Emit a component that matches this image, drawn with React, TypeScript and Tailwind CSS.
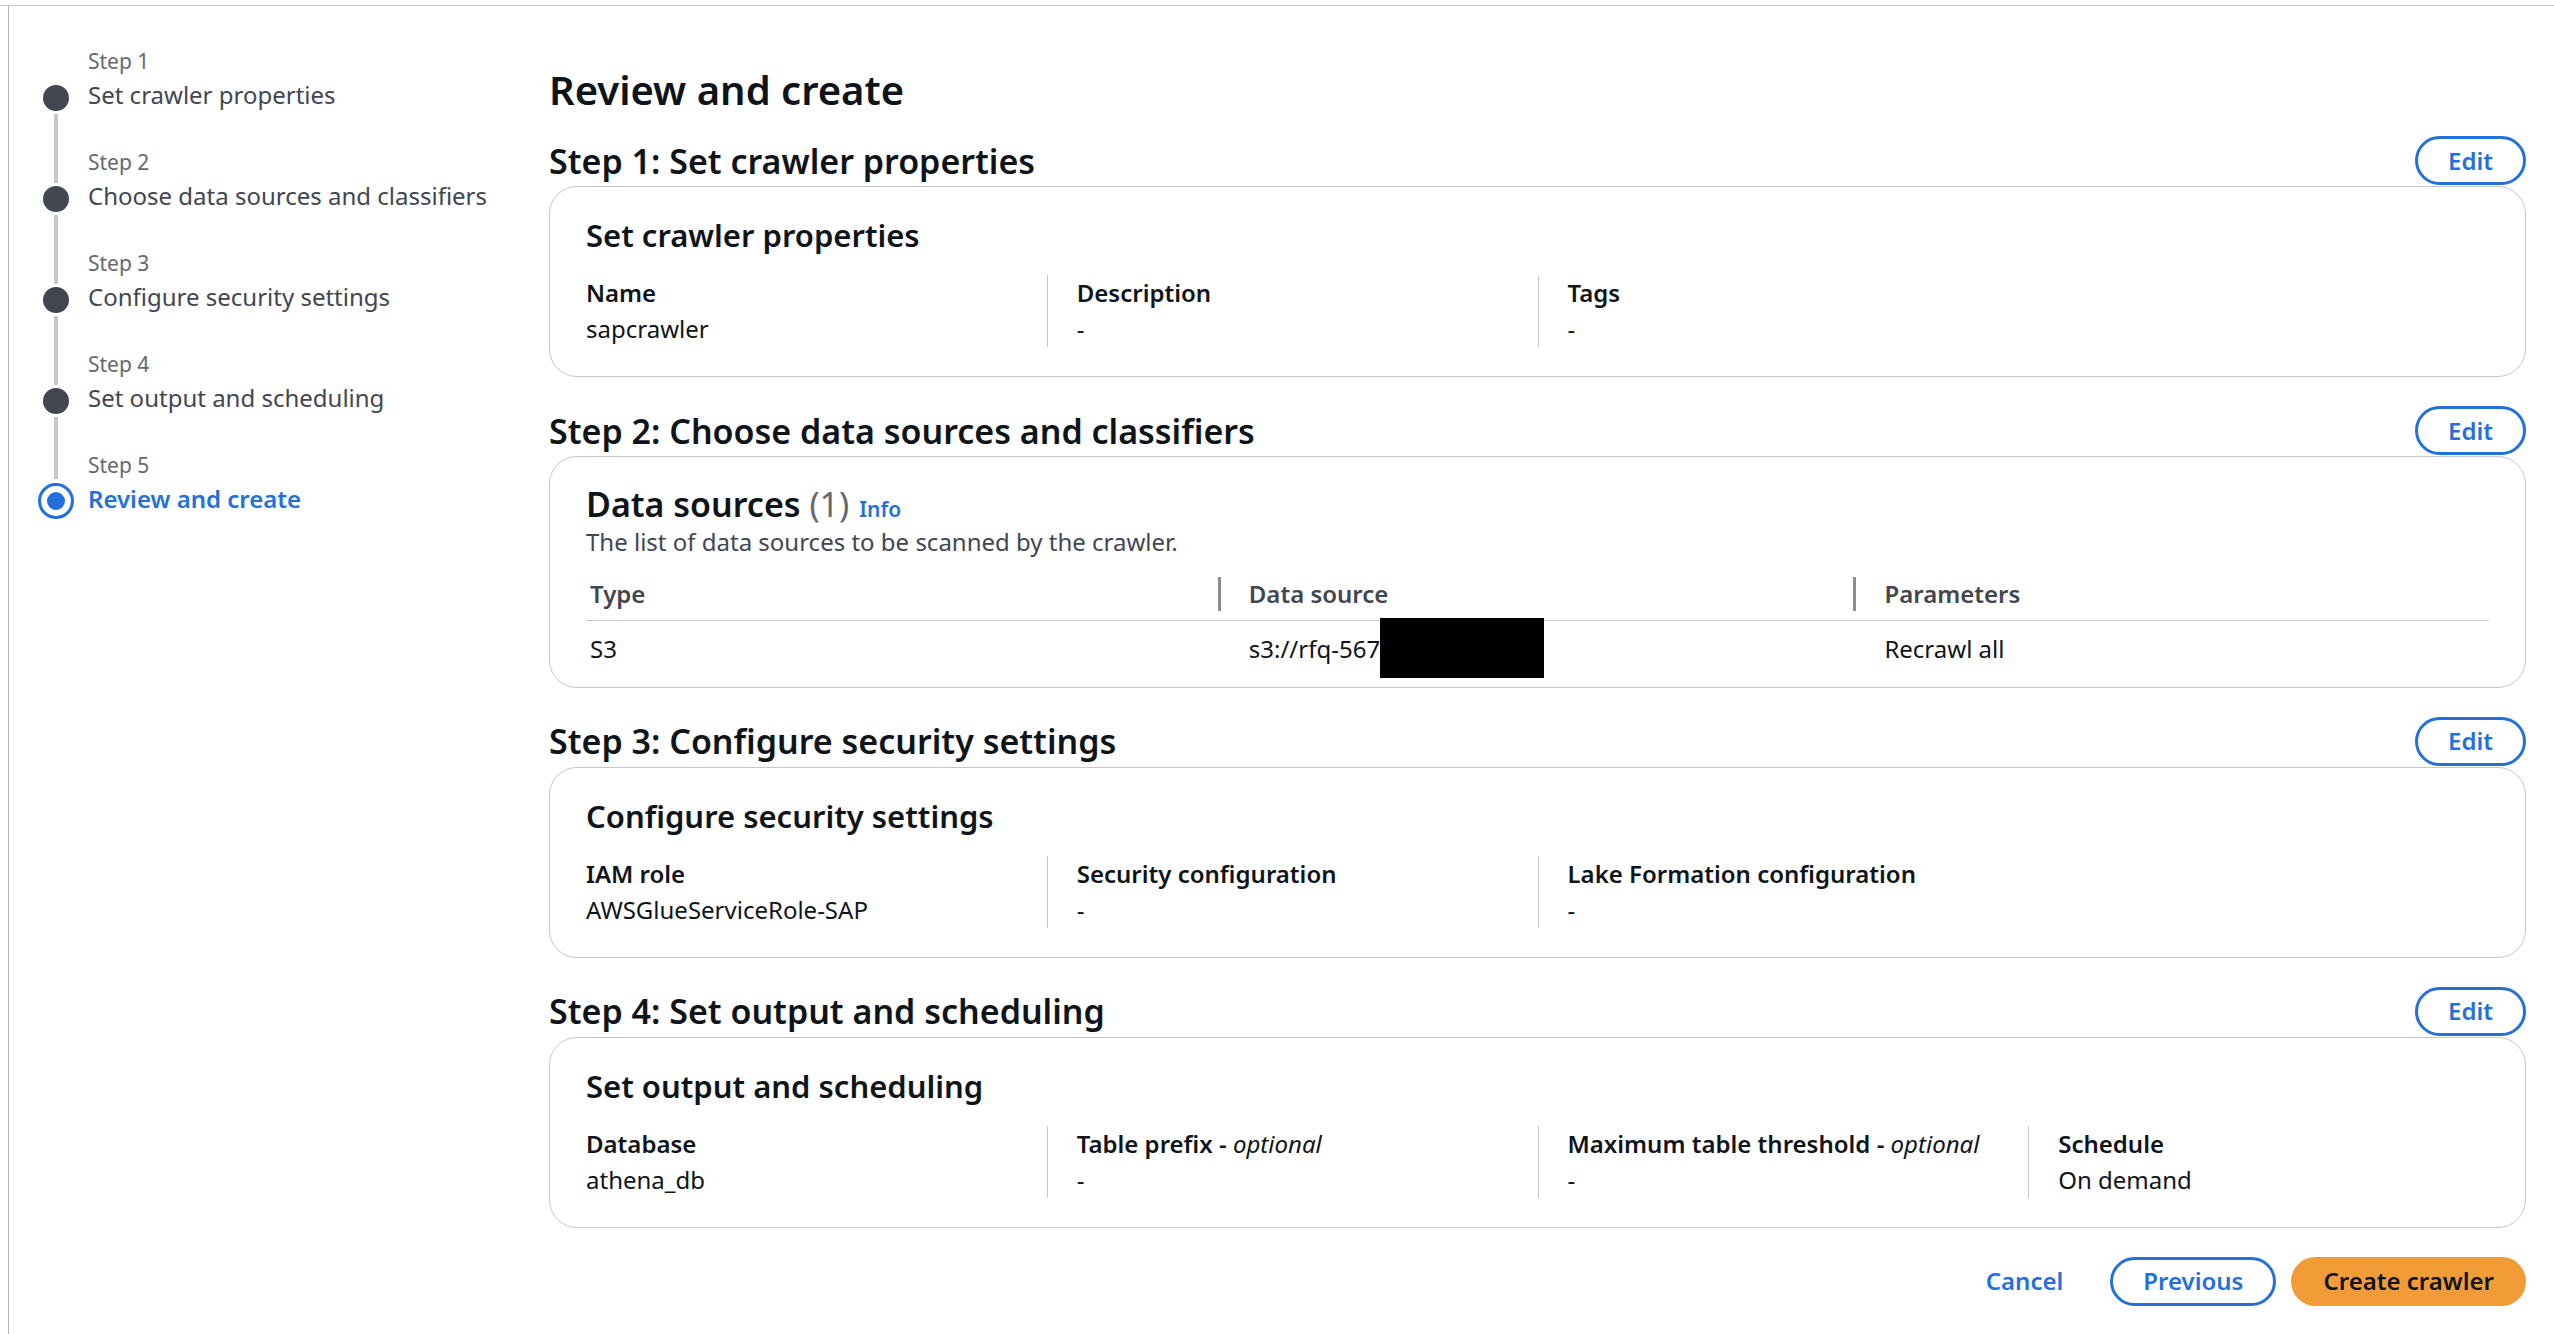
import React from "react";

type Field = { label: string; value: string; optional?: boolean };

const steps = [
  "Set crawler properties",
  "Choose data sources and classifiers",
  "Configure security settings",
  "Set output and scheduling",
  "Review and create",
];

function StepNav() {
  return (
    <nav aria-label="Steps" className="w-[540px] shrink-0 pt-10 pl-[29px]">
      <ol>
        {steps.map((title, i) => {
          const current = i === steps.length - 1;
          return (
            <li key={title} className="flex h-[101px] gap-3.5">
              <div className="flex w-9 shrink-0 flex-col items-center">
                <span
                  className={`w-1 ${current ? "mb-1 h-[29px]" : "mb-[3px] h-9"} ${
                    i === 0 ? "bg-transparent" : "bg-[#c6c6cd]"
                  }`}
                />
                {current ? (
                  <span className="flex size-9 items-center justify-center rounded-full border-3 border-[#2470db]">
                    <span className="size-[18px] rounded-full bg-[#2470db]" />
                  </span>
                ) : (
                  <>
                    <span className="size-[26px] rounded-full bg-[#424650]" />
                    <span className="mt-[3px] w-1 flex-1 bg-[#c6c6cd]" />
                  </>
                )}
              </div>
              <div className="whitespace-nowrap">
                <div className="text-[21px] leading-[30px] text-[#656871]">Step {i + 1}</div>
                {current ? (
                  <div aria-current="step" className="leading-[38px] font-semibold text-[#2470db]">
                    {title}
                  </div>
                ) : (
                  <a href="#" className="block leading-[38px] text-[#424650]">
                    {title}
                  </a>
                )}
              </div>
            </li>
          );
        })}
      </ol>
    </nav>
  );
}

function OutlineButton({ children, label }: { children: React.ReactNode; label?: string }) {
  return (
    <button
      type="button"
      aria-label={label}
      className="h-[49px] rounded-full border-3 border-[#2470db] px-[30px] leading-9 font-semibold text-[#2470db]"
    >
      {children}
    </button>
  );
}

function Section({ title, children }: { title: string; children: React.ReactNode }) {
  return (
    <section className="mb-[29px]">
      <div className="mb-px flex h-[49px] items-center justify-between">
        <h2 className="text-[34px] leading-10 font-semibold">{title}</h2>
        <OutlineButton label={`Edit ${title}`}>Edit</OutlineButton>
      </div>
      <div className="rounded-[28px] border border-[#c6c6cd] px-9">{children}</div>
    </section>
  );
}

function Fields({ title, fields }: { title: string; fields: Field[] }) {
  return (
    <div className="pt-7 pb-[29px]">
      <h3 className="mb-5 text-[31px] leading-10 font-semibold">{title}</h3>
      <dl className="-mx-[30px] grid grid-cols-4">
        {fields.map((f, i) => (
          <div
            key={f.label}
            className={`border-l pl-[29px] leading-9 whitespace-nowrap ${
              i === 0 ? "border-transparent" : "border-[#c6c6cd]"
            }`}
          >
            <dt className="font-semibold">
              {f.label}
              {f.optional && (
                <>
                  {" - "}
                  <i className="font-normal">optional</i>
                </>
              )}
            </dt>
            <dd>{f.value}</dd>
          </div>
        ))}
      </dl>
    </div>
  );
}

function DataSources() {
  return (
    <div className="pt-[27px] pb-[10px]">
      <div className="flex items-baseline">
        <h3 className="text-[34px] leading-10 font-semibold">
          Data sources <span className="font-normal text-[#656871]">(1)</span>
        </h3>
        <a href="#" className="ml-2.5 text-[21px] leading-[30px] font-semibold text-[#2470db]">
          Info
        </a>
      </div>
      <p className="leading-9 text-[#424650]">The list of data sources to be scanned by the crawler.</p>
      <table className="mt-[17px] w-full table-fixed text-left">
        <thead>
          <tr className="border-b border-[#c6c6cd] text-[#424650]">
            <th className="w-[33.2%] pb-[9px] pl-1 leading-[34px] font-semibold">Type</th>
            <th className="pb-[9px] font-semibold">
              <div className="border-l-3 border-[#8c8c94] pl-[28px] leading-[34px]">Data source</div>
            </th>
            <th className="pb-[9px] font-semibold">
              <div className="border-l-3 border-[#8c8c94] pl-[28px] leading-[34px]">Parameters</div>
            </th>
          </tr>
        </thead>
        <tbody>
          <tr className="h-14">
            <td className="pl-1">S3</td>
            <td className="pl-[31px]">
              <div className="relative w-fit">
                s3://rfq-567
                <span className="absolute -top-[15px] left-full h-[60px] w-[164px] bg-black" />
              </div>
            </td>
            <td className="pl-[31px]">Recrawl all</td>
          </tr>
        </tbody>
      </table>
    </div>
  );
}

export default function App() {
  return (
    <div className="min-h-screen bg-white pt-[5px] font-['Noto_Sans',sans-serif] text-2xl text-[#0f141a]">
      <div className="border-t border-[#c6c6cd] pl-2">
        <div className="flex min-h-[calc(100vh-6px)] border-l border-[#b4b4bb]">
          <StepNav />
          <main className="min-w-0 flex-1 pt-[60px] pr-7">
            <h1 className="mb-[22px] text-[40px] leading-12 font-semibold">Review and create</h1>
            <Section title="Step 1: Set crawler properties">
              <Fields
                title="Set crawler properties"
                fields={[
                  { label: "Name", value: "sapcrawler" },
                  { label: "Description", value: "-" },
                  { label: "Tags", value: "-" },
                ]}
              />
            </Section>
            <Section title="Step 2: Choose data sources and classifiers">
              <DataSources />
            </Section>
            <Section title="Step 3: Configure security settings">
              <Fields
                title="Configure security settings"
                fields={[
                  { label: "IAM role", value: "AWSGlueServiceRole-SAP" },
                  { label: "Security configuration", value: "-" },
                  { label: "Lake Formation configuration", value: "-" },
                ]}
              />
            </Section>
            <Section title="Step 4: Set output and scheduling">
              <Fields
                title="Set output and scheduling"
                fields={[
                  { label: "Database", value: "athena_db" },
                  { label: "Table prefix", value: "-", optional: true },
                  { label: "Maximum table threshold", value: "-", optional: true },
                  { label: "Schedule", value: "On demand" },
                ]}
              />
            </Section>
            <div className="flex justify-end gap-[15px]">
              <button type="button" className="h-[49px] px-8 leading-9 font-semibold text-[#2470db]">
                Cancel
              </button>
              <OutlineButton>Previous</OutlineButton>
              <button
                type="button"
                className="h-[49px] rounded-full bg-[#f29c38] px-8 leading-9 font-semibold"
              >
                Create crawler
              </button>
            </div>
          </main>
        </div>
      </div>
    </div>
  );
}
